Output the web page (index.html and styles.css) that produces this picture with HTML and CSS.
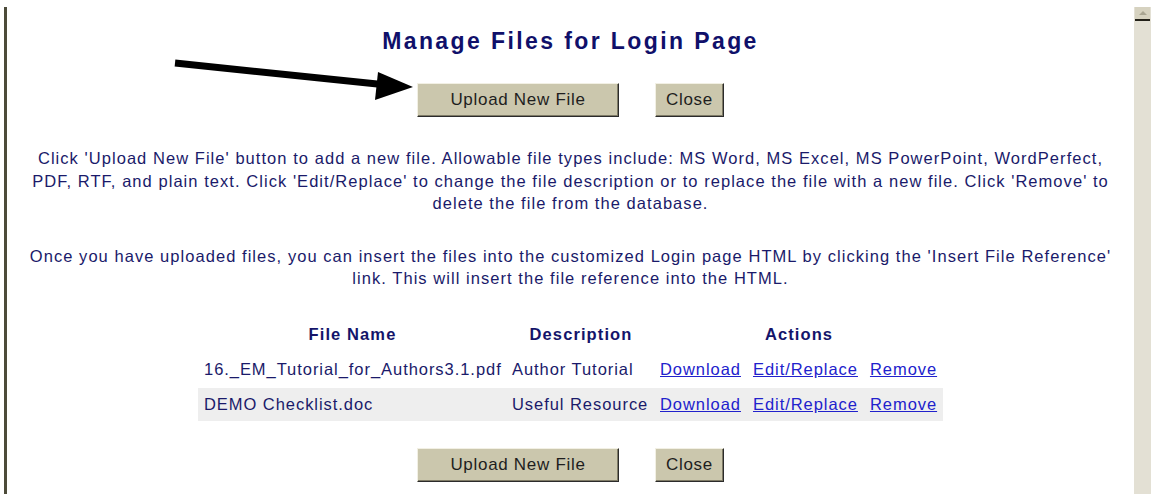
FILE: index.html
```html
<!DOCTYPE html>
<html lang="en">
<head>
<meta charset="utf-8">
<title>Manage Files for Login Page</title>
<link rel="stylesheet" href="styles.css">
</head>
<body>
<div class="window">
  <main class="page">
    <h1 class="title">Manage Files for Login Page</h1>

    <div class="button-row">
      <button class="btn btn-upload" type="button">Upload New File</button>
      <button class="btn btn-close" type="button">Close</button>
    </div>

    <p class="note">Click 'Upload New File' button to add a new file. Allowable file types include: MS Word, MS Excel, MS PowerPoint, WordPerfect, PDF, RTF, and plain text. Click 'Edit/Replace' to change the file description or to replace the file with a new file. Click 'Remove' to delete the file from the database.</p>

    <p class="note">Once you have uploaded files, you can insert the files into the customized Login page HTML by clicking the 'Insert File Reference' link. This will insert the file reference into the HTML.</p>

    <table class="files">
      <thead>
        <tr>
          <th class="col-name">File Name</th>
          <th class="col-desc">Description</th>
          <th class="col-actions">Actions</th>
        </tr>
      </thead>
      <tbody>
        <tr>
          <td>16._EM_Tutorial_for_Authors3.1.pdf</td>
          <td>Author Tutorial</td>
          <td><span class="links"><a href="#">Download</a><a href="#">Edit/Replace</a><a href="#">Remove</a></span></td>
        </tr>
        <tr class="alt">
          <td>DEMO Checklist.doc</td>
          <td>Useful Resource</td>
          <td><span class="links"><a href="#">Download</a><a href="#">Edit/Replace</a><a href="#">Remove</a></span></td>
        </tr>
      </tbody>
    </table>

    <div class="button-row button-row-bottom">
      <button class="btn btn-upload" type="button">Upload New File</button>
      <button class="btn btn-close" type="button">Close</button>
    </div>

    <!-- callout arrow pointing at the upload button -->
    <svg class="pointer" width="260" height="60" viewBox="0 0 260 60" aria-hidden="true">
      <line x1="3" y1="5" x2="215" y2="27" stroke="#000" stroke-width="7"/>
      <polygon points="206,14 241,29 203,42" fill="#000"/>
    </svg>
  </main>

  <div class="scrollbar">
    <div class="scroll-up"><span class="scroll-arrow"></span></div>
  </div>
</div>
</body>
</html>
```

FILE: styles.css
```css
html, body {
  margin: 0;
  padding: 0;
  background: #ffffff;
}

body {
  font-family: "Liberation Sans", Arial, sans-serif;
  color: #1a1a6a;
}

.window {
  display: flex;
  height: 487px;
  padding-top: 7px;
  overflow: hidden;
}

/* main document area with its dark frame line on the left */
.page {
  position: relative;
  flex: 1;
  margin-left: 4px;
  border-left: 3px solid #4d4b3a;
  padding-top: 20px;
  text-align: center;
}

.title {
  margin: 0;
  font-size: 23px;
  line-height: 28px;
  letter-spacing: 2.4px;
  font-weight: bold;
  color: #10106a;
}

.button-row {
  display: flex;
  justify-content: center;
  gap: 36px;
  margin-top: 28px;
}

.button-row-bottom {
  margin-top: 25px;
}

.btn {
  height: 34px;
  padding: 0;
  font-family: "Liberation Sans", Arial, sans-serif;
  font-size: 17px;
  letter-spacing: 0.7px;
  color: #1e1e1e;
  background: #cbc7ad;
  border: 1px solid;
  border-color: #f2f0e4 #2b2b2b #2b2b2b #f2f0e4;
  box-shadow: inset -1px -1px 0 #7f7b66;
  border-radius: 0;
}

.btn-upload {
  width: 202px;
}

.btn-close {
  width: 69px;
}

.note {
  margin: 30px 0 0;
  padding: 0 14px;
  font-size: 16.5px;
  letter-spacing: 1.05px;
  line-height: 22.5px;
  color: #1a1a6a;
}

.files {
  margin: 26px auto 0;
  border-collapse: separate;
  border-spacing: 0 2px;
  font-size: 16.5px;
  letter-spacing: 0.95px;
  color: #1a1a6a;
  text-align: left;
}

.files th,
.files td {
  height: 33px;
  padding: 0 5px;
  white-space: nowrap;
  vertical-align: middle;
}

.files th {
  text-align: center;
  font-weight: bold;
  letter-spacing: 1.1px;
  color: #14146a;
}

.col-name {
  width: 299px;
}

.col-desc {
  width: 138px;
}

.col-actions {
  width: 278px;
}

.files td:first-child {
  padding-left: 6px;
}

.files tr.alt td {
  background: #eeeeee;
}

.links {
  display: inline-flex;
  gap: 12px;
}

.links a {
  color: #2121cc;
  text-decoration: underline;
}

/* annotation arrow laid over the page */
.pointer {
  position: absolute;
  left: 165px;
  top: 51px;
}

/* classic vertical scrollbar track */
.scrollbar {
  width: 17px;
  background: #e3e0d4;
  display: flex;
  flex-direction: column;
}

.scroll-up {
  height: 12px;
  margin: 0 1px;
  background: #d6d2c0;
  border-bottom: 2px solid #222018;
  display: flex;
  align-items: center;
  justify-content: center;
}

.scroll-arrow {
  width: 0;
  height: 0;
  border-left: 4px solid transparent;
  border-right: 4px solid transparent;
  border-bottom: 4px solid #a9a592;
}
```
